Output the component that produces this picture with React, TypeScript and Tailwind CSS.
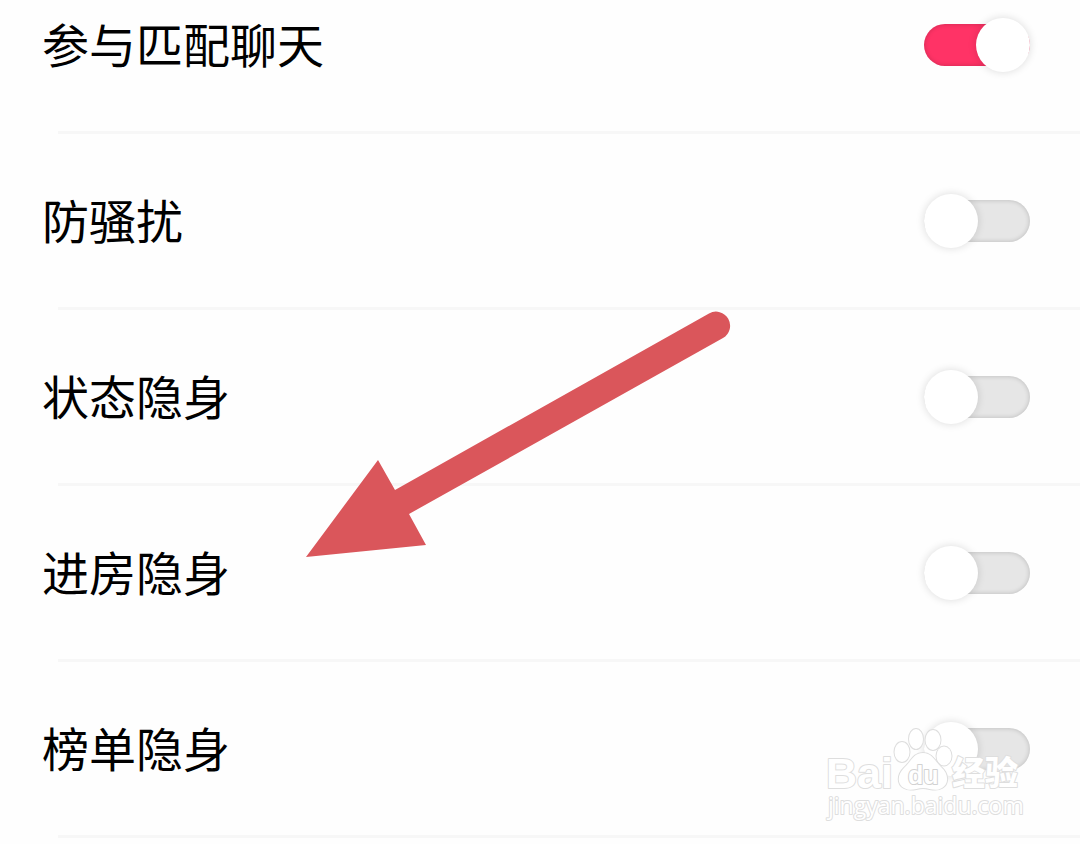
import { useState } from "react";

const initialSettings = [
  { id: "match-chat", label: "参与匹配聊天", on: true },
  { id: "anti-harassment", label: "防骚扰", on: false },
  { id: "hide-status", label: "状态隐身", on: false },
  { id: "hide-room-entry", label: "进房隐身", on: false },
  { id: "hide-ranking", label: "榜单隐身", on: false },
];

type SwitchProps = { id: string; checked: boolean; onChange: () => void };

function Switch({ id, checked, onChange }: SwitchProps) {
  return (
    <input
      id={id}
      type="checkbox"
      role="switch"
      checked={checked}
      onChange={onChange}
      className="flex h-[42px] w-[106px] shrink-0 cursor-pointer appearance-none items-center rounded-full bg-[#e6e6e6] shadow-[inset_0_0_5px_rgba(0,0,0,0.2)] before:size-[54px] before:shrink-0 before:rounded-full before:bg-white before:shadow-[0_0_8px_rgba(0,0,0,0.14)] before:content-[''] checked:justify-end checked:bg-[#ff3366]"
    />
  );
}

function Arrow() {
  return (
    <svg
      aria-hidden="true"
      viewBox="0 0 426 248"
      className="pointer-events-none absolute top-[311px] left-[305px] h-[248px] w-[426px]"
    >
      <path
        d="M1 246 L73 149 L90 179 L404 2.500 A14 14 0 0 1 418 27 L104 203 L121 234 Z"
        fill="#da565b"
      />
    </svg>
  );
}

function Watermark() {
  return (
    <svg
      role="img"
      aria-label="Baidu 经验"
      viewBox="0 0 200 100"
      className="pointer-events-none absolute top-[724px] left-[825px] h-[100px] w-[200px]"
    >
      <g fill="#ffffff" stroke="#dedede" strokeWidth="2" strokeLinejoin="round" paintOrder="stroke">
        <text x="1" y="64" fontSize="43" fontWeight="700" className="font-['Liberation_Sans',sans-serif]">
          Bai
        </text>
        <ellipse cx="77" cy="28" rx="7.500" ry="10" />
        <ellipse cx="91" cy="15" rx="7" ry="10" />
        <ellipse cx="108" cy="16" rx="7.500" ry="10" />
        <ellipse cx="119" cy="32" rx="7.500" ry="9.500" />
        <path d="M98 29 C107 29 110 37 116 43 C124 50 124 60 117 64 C110 68 105 64 98 64 C91 64 86 68 79 64 C72 60 72 51 79 44 C86 38 88 29 98 29 Z" />
        <text
          x="83"
          y="60"
          fontSize="25"
          fontWeight="700"
          stroke="#d2d2d2"
          className="font-['Liberation_Sans',sans-serif]"
        >
          du
        </text>
        <text x="127" y="61" fontSize="33" fontWeight="900" className="font-['Noto_Sans_CJK_SC',sans-serif]">
          经验
        </text>
        <text x="3" y="90" fontSize="23" className="font-['Open_Sans',sans-serif]">
          jingyan.baidu.com
        </text>
      </g>
    </svg>
  );
}

export default function App() {
  const [settings, setSettings] = useState(initialSettings);

  const toggle = (id: string) =>
    setSettings((items) =>
      items.map((item) => (item.id === id ? { ...item, on: !item.on } : item)),
    );

  return (
    <main className="relative min-h-screen overflow-hidden bg-[#fefefe] font-['Noto_Sans_CJK_SC',sans-serif] text-black">
      <ul className="-mt-[42px]">
        {settings.map((item) => (
          <li key={item.id}>
            <div className="flex h-[173px] items-center justify-between pr-[50px] pl-[42px]">
              <label htmlFor={item.id} className="pb-[3px] text-[47px] leading-[60px]">
                {item.label}
              </label>
              <Switch id={item.id} checked={item.on} onChange={() => toggle(item.id)} />
            </div>
            <div className="ml-[58px] h-[3px] bg-[#f7f7f7]" />
          </li>
        ))}
      </ul>
      <Arrow />
      <Watermark />
    </main>
  );
}
